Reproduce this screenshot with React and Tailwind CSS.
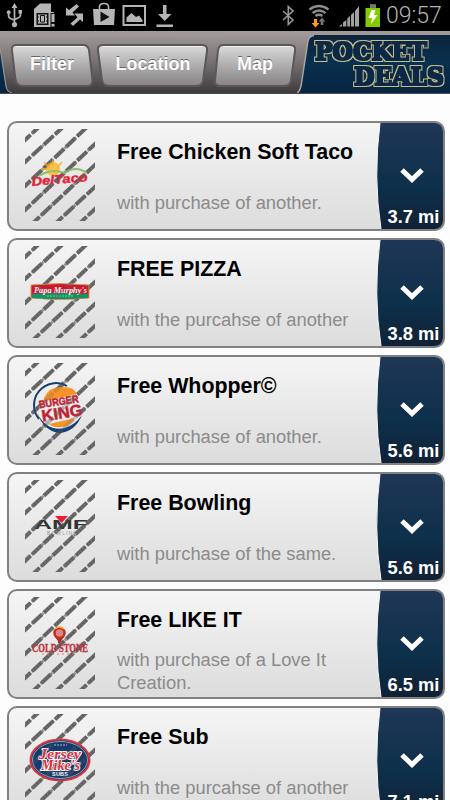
import React from "react";

const SANS = "font-['Liberation_Sans',Arial,sans-serif]";

function StatusBar() {
  return (
    <div className="flex h-[31px] shrink-0 items-center justify-between bg-black pr-[8px]">
      <svg className="h-[31px] w-[180px]" viewBox="0 0 180 31" fill="#b5b5b5">
        <g stroke="#b5b5b5" fill="none" strokeWidth="1.7">
          <path d="M14.500 7V25M8.600 13V16.200Q8.600 17.800 11 18.800L14.500 20.300M20.400 12V15.500Q20.400 17 18 18L14.500 19.500" />
        </g>
        <path d="M14.500 3L17.500 8H11.500ZM18.500 10H22V13.500H18.500Z" />
        <circle cx="8.7" cy="12.2" r="1.9" />
        <circle cx="14.5" cy="24.6" r="2.6" />
        <path d="M34 9L40 3.500H51V12H54V27H34Z" />
        <path d="M36.500 13H48.500V25H36.500ZM50.500 13H55V27H50.500Z" fill="#111" />
        <path d="M38 14.500H47V23.500H38ZM51.500 14H54.500V22H51.500ZM51.500 24H54.500V26.500H51.500Z" />
        <path d="M40.500 15.500H44.500V22H40.500Z" stroke="#111" />
        <path d="M37 17H39M37 21H39M46 17H48M46 21H48" stroke="#111" />
        <path d="M76.500 4L79 6.500L72.500 12.500L75 15.500H66V7.500L69 10ZM73 26L70.500 23.500L77.500 17.500L74.500 13.500H83V22L80 19.500Z" />
        <path d="M93 9H115L114 25H94Z" />
        <path d="M99.500 9V7Q99.500 3.500 104 3.500T108.500 7V9" fill="none" stroke="#b5b5b5" strokeWidth="1.6" />
        <path d="M100.500 11.500L109.500 17L100.500 22Z" fill="#111" />
        <rect x="123.500" y="6" width="21.500" height="19" fill="none" stroke="#b5b5b5" strokeWidth="2" />
        <path d="M126.500 22V17.500L131.500 13L136 17L139 15.500L142.500 20V22Z" />
        <path d="M163 5H166.500V14H171.500L164.700 21L158 14H163ZM156.500 24.500H173V27H156.500Z" />
      </svg>
      <div className="flex h-full items-center">
        <svg className="h-[31px] w-[106px]" viewBox="280 0 106 31">
          <path d="M283 11L293 20L288.300 24.500V6.500L293 11L283 20" fill="none" stroke="#999" strokeWidth="1.6" />
          <g fill="none" stroke="#8d8d8d" strokeWidth="2.300">
            <path d="M309.500 9.500Q319 2.500 328.500 9.500M312.500 13Q319 8 325.500 13M315.500 16Q319 13.500 322.500 16" />
          </g>
          <path d="M314 19H317V23H319.500L315.500 27.500L311.500 23H314Z" fill="#ff9c1a" />
          <path d="M320.700 25V21.500H318.800L322 17.500L325.200 21.500H323.300V25Z" fill="#777" />
          <path d="M339 26.500L342 24V26.500ZM343 26.500V22.500L346.300 20V26.500ZM347.300 26.500V18.500L350 16V26.500ZM351 26.500V15L354 12V26.500ZM355 26.500V11L359 6V26.500Z" fill="#a0a0a0" />
          <path d="M370 4.500H376V8H380V27H365.500V8H370Z" fill="#84cc00" />
          <path d="M370 4.500H376V8H370Z" fill="#777" />
          <path d="M371.500 10H375.500L374 15H377.500L371 24L372 18H368.500Z" fill="white" />
        </svg>
        <span className="w-[56px] whitespace-nowrap pt-px font-[Roboto,sans-serif] text-[23px] leading-[30px] font-light text-[#b4b4b4]">09:57</span>
      </div>
    </div>
  );
}

function NavButton({ label, d, left, width }) {
  return (
    <button className={"relative flex h-[46px] shrink-0 items-center justify-center pb-[4px] text-[18px] font-bold text-white [text-shadow:0_-1px_0_#666] " + left + " " + width}>
      <svg className="absolute inset-0 h-full w-full" viewBox={d.box}>
        <path d={d.path} fill="url(#button)" stroke="#5c5859" strokeWidth="2" />
        <path d={d.shine} stroke="#f1f1f1" strokeWidth="1.2" fill="none" />
      </svg>
      <span className="relative">{label}</span>
    </button>
  );
}

const FILTER = {
  box: "0 0 84 46",
  path: "M6 2H73Q78 2 79 7L82.500 37Q83 43 77 43H13Q7 43 5.500 37L2 8Q1 2 6 2Z",
  shine: "M6 3.500H74",
};
const LOCATION = {
  box: "0 0 114 46",
  path: "M7 2H106Q112 2 111 8L107 38Q106 43 100 43H13Q7 43 6 37L2 8Q1 2 7 2Z",
  shine: "M7 3.500H106",
};
const MAP = {
  box: "0 0 84 46",
  path: "M10 2H77Q83 2 82 8L78 38Q77 43 71 43H7Q1 43 2 37L5 7Q6 2 10 2Z",
  shine: "M10 3.500H77",
};

function Header() {
  return (
    <header className="relative flex h-[63px] shrink-0 items-start overflow-hidden pt-[12px]">
      <svg className="absolute inset-0 h-full w-full" viewBox="0 31 450 63">
        <defs>
          <linearGradient id="metal" x1="0" y1="0" x2="0" y2="1">
            <stop offset="0" stopColor="#a29c9c" />
            <stop offset=".5" stopColor="#777172" />
            <stop offset="1" stopColor="#3e3a3b" />
          </linearGradient>
          <linearGradient id="button" x1="0" y1="0" x2="0" y2="1">
            <stop offset="0" stopColor="#dcdcdc" />
            <stop offset=".55" stopColor="#aaa8a9" />
            <stop offset="1" stopColor="#878384" />
          </linearGradient>
          <linearGradient id="brand" x1="0" y1="0" x2="0" y2="1">
            <stop offset="0" stopColor="#0c2238" />
            <stop offset=".5" stopColor="#08304f" />
            <stop offset="1" stopColor="#082440" />
          </linearGradient>
          <filter id="outline" x="-5%" y="-15%" width="110%" height="130%" colorInterpolationFilters="sRGB">
            <feMorphology in="SourceAlpha" operator="dilate" radius="2" result="wide" />
            <feFlood floodColor="#c9bd8c" />
            <feComposite in2="wide" operator="in" result="edge" />
            <feMorphology in="SourceGraphic" operator="dilate" radius="1" result="body" />
            <feMerge>
              <feMergeNode in="edge" />
              <feMergeNode in="body" />
            </feMerge>
          </filter>
        </defs>
        <rect y="31" width="450" height="63" fill="url(#brand)" />
        <path d="M0 31H450V35H315Q309 35 308 41L301 86Q299.500 93 294 93H14Q7 93 6 86L0 48Z" fill="url(#metal)" />
        <path d="M0 31H450V35H300L0 37Z" fill="#9f9999" />
        <path d="M314 35.500Q309 36 308 41L301 86Q299.500 92 297 93" fill="none" stroke="#a5a5a7" strokeWidth="1.500" />
        <path d="M0 48L6 86Q7 92 12 93" fill="none" stroke="#969696" strokeWidth="1.200" />
        <path d="M0 93.500H450" stroke="#444c57" />
        <g fill="#0b2946" filter="url(#outline)" fontFamily="DejaVu Serif, serif" fontWeight="bold" fontSize="23.5">
          <text x="315" y="59.500" textLength="112" lengthAdjust="spacingAndGlyphs">POCKET</text>
          <text x="354" y="84.500" textLength="90" lengthAdjust="spacingAndGlyphs">DEALS</text>
        </g>
      </svg>
      <NavButton label="Filter" d={FILTER} left="ml-[10px]" width="w-[84px]" />
      <NavButton label="Location" d={LOCATION} left="ml-[2px]" width="w-[114px]" />
      <NavButton label="Map" d={MAP} left="ml-[3px]" width="w-[84px]" />
    </header>
  );
}

function DelTaco() {
  return (
    <g>
      <circle cx="28" cy="40" r="7" fill="#ffb92c" opacity=".85" />
      <path d="M19 33L25 39M28 30V37M37 33L32 39M16 40H24" stroke="#ffb52b" strokeWidth="1.500" />
      <path d="M14 47Q27 39 39 44Q51 36 62 44" fill="none" stroke="#8bc26a" strokeWidth="2" />
      <text x="7" y="57" textLength="56" lengthAdjust="spacingAndGlyphs" fill="#e51f35" stroke="#e51f35" strokeWidth=".4" fontSize="12.500" fontWeight="bold" fontStyle="italic" transform="rotate(-5 7 57)">DelTaco</text>
    </g>
  );
}

function PapaMurphys() {
  return (
    <g>
      <path d="M6 39Q34 36 64 39V52Q34 55 6 52Z" fill="#d4142d" stroke="#c3a34d" />
      <path d="M7 48Q35 46 63 48V52Q34 54 7 52Z" fill="#129563" />
      <text x="9" y="46.500" textLength="53" lengthAdjust="spacingAndGlyphs" fill="white" fontSize="9" fontStyle="italic" fontWeight="bold" fontFamily="Liberation Serif, serif">Papa Murphy's</text>
      <path d="M22 50H48" stroke="#7ac9a3" strokeDasharray="2 1" />
    </g>
  );
}

function BurgerKing() {
  return (
    <g>
      <circle cx="35" cy="46" r="21" fill="#eee" opacity=".7" />
      <path d="M42 23A22 22 0 0 0 14 56" fill="none" stroke="#173f73" strokeWidth="2" />
      <path d="M12 50Q22 69 40 65Q50 62 57 52Q50 69 34 70Q19 68 12 50Z" fill="#173f73" />
      <path d="M19 35Q24 23 38 24Q49 24 52 31L19 38ZM24 61L50 55Q46 62 37 64Q29 65 24 61Z" fill="#f79327" />
      <g fill="#c51d32" stroke="#c51d32" strokeWidth=".5" fontWeight="bold" transform="rotate(-9 36 47)">
        <text x="15" y="42" fontSize="10.500" textLength="40" lengthAdjust="spacingAndGlyphs">BURGER</text>
        <text x="16" y="55.500" fontSize="16" textLength="41" lengthAdjust="spacingAndGlyphs">KING</text>
      </g>
    </g>
  );
}

function Amf() {
  return (
    <g>
      <text x="9" y="49" textLength="54" lengthAdjust="spacingAndGlyphs" fill="#333" fontWeight="bold" fontSize="13">AMF</text>
      <path d="M30 36H43L36.500 43Z" fill="#f01f30" />
      <text x="22" y="55" textLength="30" fill="#999" fontSize="5">BOWLING</text>
    </g>
  );
}

function ColdStone() {
  return (
    <g>
      <path d="M30 40L33 44V46H36V44L39 40Z" fill="#a93122" />
      <circle cx="34.500" cy="36" r="5" fill="#df8580" stroke="#be2e1d" strokeWidth="2.500" />
      <path d="M30 32Q34 28 39 32" fill="none" stroke="#edac3c" strokeWidth="1.500" />
      <text x="7" y="55" textLength="56" lengthAdjust="spacingAndGlyphs" fill="#c72f3a" stroke="#c72f3a" strokeWidth=".4" fontSize="13" fontWeight="bold" fontFamily="Liberation Serif, serif">COLD STONE</text>
      <path d="M17 57H52" stroke="#d67a55" strokeWidth="1.200" strokeDasharray="2 3" />
    </g>
  );
}

function JerseyMikes() {
  return (
    <g>
      <ellipse cx="35" cy="46" rx="29.500" ry="20.500" fill="#173a6b" stroke="#e3303d" strokeWidth="2" />
      <ellipse cx="35" cy="46" rx="27.500" ry="18.500" fill="none" stroke="#aebbd0" strokeWidth=".8" />
      <g fill="#e32d3a" stroke="#fff" strokeWidth="1.800" paintOrder="stroke" fontWeight="bold" fontStyle="italic" fontFamily="Liberation Serif, serif">
        <text x="14" y="45" textLength="42" lengthAdjust="spacingAndGlyphs" fontSize="15">Jersey</text>
        <text x="16" y="56" textLength="39" lengthAdjust="spacingAndGlyphs" fontSize="14">Mike's</text>
      </g>
      <path d="M29 31H42" stroke="#aebbd0" strokeDasharray="2 1" />
      <text x="27" y="62" fontSize="5.500" fontWeight="bold" fill="white" textLength="16">SUBS</text>
    </g>
  );
}

function Stripes() {
  return (
    <g fill="none">
      <path d="M-1 12L15 -3M-1 34L38 -2M-1 58L62 -2M-1 82L72 13M8 94L72 34M31 94L72 56M55 94L72 78" stroke="#707070" strokeWidth="4" strokeDasharray="13 2.500" strokeDashoffset="4" />
      <path d="M-1 12L15 -3M-1 34L38 -2M-1 58L62 -2M-1 82L72 13M8 94L72 34M31 94L72 56M55 94L72 78" stroke="#505050" strokeWidth="2.600" strokeDasharray="2 1.500" opacity=".55" />
    </g>
  );
}

const DEALS = [
  { title: "Free Chicken Soft Taco", text: "with purchase of another.", distance: "3.7 mi", Logo: DelTaco },
  { title: "FREE PIZZA", text: "with the purcahse of another", distance: "3.8 mi", Logo: PapaMurphys },
  { title: "Free Whopper©", text: "with purchase of another.", distance: "5.6 mi", Logo: BurgerKing },
  { title: "Free Bowling", text: "with purchase of the same.", distance: "5.6 mi", Logo: Amf },
  { title: "Free LIKE IT", text: "with purchase of a Love It Creation.", distance: "6.5 mi", Logo: ColdStone, tall: true },
  { title: "Free Sub", text: "with the purcahse of another", distance: "7.1 mi", Logo: JerseyMikes },
];

function DealCard({ title, text, distance, Logo, tall }) {
  return (
    <article className="flex h-[110px] shrink-0 overflow-hidden rounded-[10px] border-2 border-[#818181] bg-linear-to-b from-[#f5f5f5] to-[#dcdcdc]">
      <svg className="mt-[6px] ml-[16px] h-[92px] w-[70px] shrink-0 overflow-hidden" viewBox="0 0 70 92" fontFamily="Liberation Sans, sans-serif">
        <Stripes />
        <Logo />
        <g opacity=".25"><Stripes /></g>
      </svg>
      <div className="ml-[22px] w-[259px] shrink-0 pt-[17px]">
        <h2 className="text-[21.4px] leading-[25px] font-bold whitespace-nowrap text-black">{title}</h2>
        <p className={"w-[245px] text-[18.35px] leading-[22.5px] text-[#8b8b8b] " + (tall ? "mt-[16px]" : "mt-[27px]")}>{text}</p>
      </div>
      <div className="relative flex w-[67px] shrink-0 flex-col items-center">
        <svg className="absolute inset-0 h-full w-full" viewBox="0 0 67 106">
          <defs>
            <linearGradient id="navy" x1="0" y1="0" x2="0" y2="1">
              <stop offset="0" stopColor="#203656" />
              <stop offset=".6" stopColor="#0d304b" />
              <stop offset="1" stopColor="#102135" />
            </linearGradient>
          </defs>
          <path d="M4 0H67V106H5Q-3 54 4 0Z" fill="url(#navy)" />
          <path d="M4 0Q-3 54 5 106" fill="none" stroke="#f8f8f8" strokeWidth="1" />
          <path d="M26 47L36 56.500L46 47" fill="none" stroke="white" strokeWidth="5" />
        </svg>
        <span className="relative mt-[83px] ml-[8px] text-[18.3px] leading-[22px] font-bold whitespace-nowrap text-white">{distance}</span>
      </div>
    </article>
  );
}

export default function App() {
  return (
    <div className={"flex h-[800px] w-[450px] flex-col overflow-hidden bg-[#fdfdfd] " + SANS}>
      <StatusBar />
      <Header />
      <main className="mt-[27px] flex flex-col gap-[7px] pr-[5px] pl-[7px]">
        {DEALS.map((deal) => (
          <DealCard key={deal.title} {...deal} />
        ))}
      </main>
    </div>
  );
}
